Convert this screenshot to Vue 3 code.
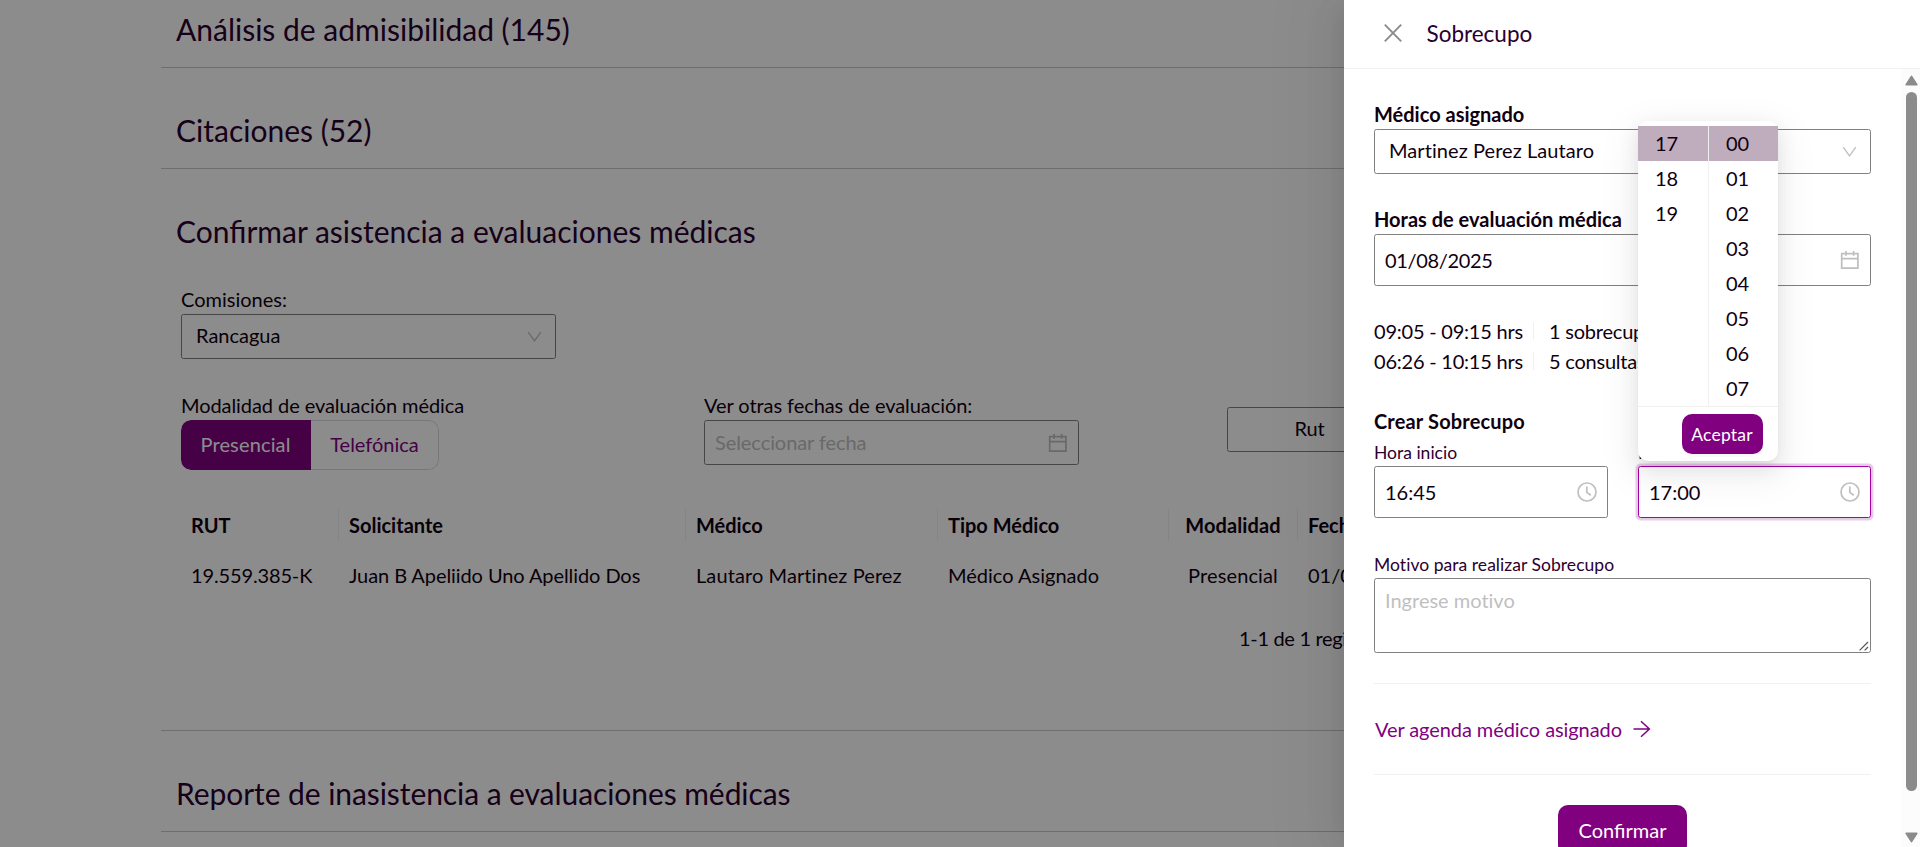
<script setup>
const columns = [
  { key: 'rut', title: 'RUT', value: '19.559.385-K' },
  { key: 'solicitante', title: 'Solicitante', value: 'Juan B Apeliido Uno Apellido Dos' },
  { key: 'medico', title: 'Médico', value: 'Lautaro Martinez Perez' },
  { key: 'tipo', title: 'Tipo Médico', value: 'Médico Asignado' },
  { key: 'modalidad', title: 'Modalidad', value: 'Presencial' },
  { key: 'fecha', title: 'Fecha', value: '01/08/2025' },
]
const slots = [
  { range: '09:05 - 09:15 hrs', detail: '1 sobrecupo' },
  { range: '06:26 - 10:15 hrs', detail: '5 consultas' },
]
const hours = ['17', '18', '19']
const minutes = ['00', '01', '02', '03', '04', '05', '06', '07']
</script>

<template>
  <div class="app">
    <main class="page">
      <section class="panel"><h2>Análisis de admisibilidad (145)</h2></section>
      <section class="panel"><h2>Citaciones (52)</h2></section>
      <section class="panel open">
        <h2>Confirmar asistencia a evaluaciones médicas</h2>
        <div class="content">
          <div class="field">
            <label>Comisiones:</label>
            <div class="select">
              <span>Rancagua</span>
              <svg class="chev" viewBox="0 0 15 12"><path d="M1.2 1.2 7.5 10 13.8 1.2" /></svg>
            </div>
          </div>
          <div class="filters">
            <div class="modality">
              <label>Modalidad de evaluación médica</label>
              <div class="segmented"><span class="on">Presencial</span><span>Telefónica</span></div>
            </div>
            <div class="other-date">
              <label>Ver otras fechas de evaluación:</label>
              <div class="date">
                <span>Seleccionar fecha</span>
                <svg class="cal" viewBox="0 0 20 20"><path d="M1.7 3.7h16.2v14.4H1.7zM1.7 8.7h16.2M6 1v4.8M13.6 1v4.8" /></svg>
              </div>
            </div>
            <div class="rut-box">Rut</div>
          </div>
          <div class="grid head">
            <div v-for="c in columns" :key="c.key" :class="c.key">{{ c.title }}</div>
          </div>
          <div class="grid row">
            <div v-for="c in columns" :key="c.key" :class="c.key">{{ c.value }}</div>
          </div>
          <div class="pager">1-1 de 1 registros</div>
        </div>
      </section>
      <section class="panel"><h2 class="tight">Reporte de inasistencia a evaluaciones médicas</h2></section>
    </main>

    <div class="mask"></div>

    <aside class="drawer">
      <header>
        <svg class="close" viewBox="0 0 20 20"><path d="M1.8 1.6 18.2 18.4M18.2 1.6 1.8 18.4" /></svg>
        <span>Sobrecupo</span>
      </header>
      <div class="scroller">
        <div class="body">
          <label class="strong">Médico asignado</label>
          <div class="select doctor">
            <span>Martinez Perez Lautaro</span>
            <svg class="chev" viewBox="0 0 15 12"><path d="M1.2 1.2 7.5 10 13.8 1.2" /></svg>
          </div>
          <label class="strong hours-label">Horas de evaluación médica</label>
          <div class="input">
            <span class="day">01/08/2025</span>
            <svg class="cal" viewBox="0 0 20 20"><path d="M1.7 3.7h16.2v14.4H1.7zM1.7 8.7h16.2M6 1v4.8M13.6 1v4.8" /></svg>
          </div>
          <div class="slots">
            <div v-for="s in slots" :key="s.range" class="slot"><span>{{ s.range }}</span><i></i><span>{{ s.detail }}</span></div>
          </div>
          <label class="strong create">Crear Sobrecupo</label>
          <div class="times">
            <div>
              <label class="small">Hora inicio</label>
              <div class="input">
                <span>16:45</span>
                <svg class="clock" viewBox="0 0 22 22"><circle cx="11" cy="11" r="9" /><path d="M10.8 5.6v5.8l4 2.8" /></svg>
              </div>
            </div>
            <div>
              <label class="small">Hora fin</label>
              <div class="input focus">
                <span>17:00</span>
                <svg class="clock" viewBox="0 0 22 22"><circle cx="11" cy="11" r="9" /><path d="M10.8 5.6v5.8l4 2.8" /></svg>
              </div>
            </div>
          </div>
          <label class="small reason">Motivo para realizar Sobrecupo</label>
          <div class="textarea">
            <span>Ingrese motivo</span>
            <svg class="grip" viewBox="0 0 10 10"><path d="M.6 9.4 9 1M5.6 9.4 9 6" /></svg>
          </div>
          <hr class="first" />
          <a class="link">
            <span>Ver agenda médico asignado</span>
            <svg viewBox="0 0 18 18"><path d="M.5 9h16M8 1.2 16.4 9 8 16.8" /></svg>
          </a>
          <hr />
          <button class="confirm">Confirmar</button>
        </div>
        <div class="scrollbar">
          <svg viewBox="0 0 13 11"><path d="M6.5 1.4 11.8 9.6H1.2z" /></svg>
          <div class="thumb"></div>
          <svg viewBox="0 0 13 11"><path d="M6.5 9.6 11.8 1.4H1.2z" /></svg>
        </div>
      </div>
    </aside>

    <div class="popup">
      <div class="cols">
        <div class="col"><div v-for="(h, i) in hours" :key="h" :class="{ sel: i === 0 }">{{ h }}</div></div>
        <div class="col"><div v-for="(m, i) in minutes" :key="m" :class="{ sel: i === 0 }">{{ m }}</div></div>
      </div>
      <div class="foot"><button>Aceptar</button></div>
    </div>
  </div>
</template>

<style>
body { margin: 0; overflow: hidden; background: #fff; }
</style>

<style scoped>
* { box-sizing: border-box; }
.app { position: relative; width: 1920px; height: 847px; overflow: hidden; font: 20px/30px Lato, "Noto Sans", sans-serif; font-variant-ligatures: none; color: #10000f; white-space: nowrap; }
svg { display: block; flex: none; fill: none; stroke: #bfbfbf; stroke-width: 1.7; }
button { font-family: inherit; border: 0; background: #800080; color: #fff; padding: 0; }
label { display: block; }
.page { margin: -33px 0 0 161px; }
.panel { height: 101px; border-bottom: 1px solid #c8c8c8; padding: 44px 0 0 15px; }
.panel.open { height: 562px; }
h2 { margin: 0; font-size: 30px; line-height: 36px; font-weight: 400; color: #2b0030; font-variant-ligatures: normal; letter-spacing: 0; }
.tight { letter-spacing: -.07px; }
.content { padding: 34px 0 0 5px; }
.field label { height: 31px; line-height: 32px; }
.select, .date, .input { display: flex; align-items: center; justify-content: space-between; border: 1px solid #808080; border-radius: 2.5px; }
.select { height: 45px; padding: 0 13px 0 14px; }
.select span { padding-bottom: 3px; }
.date span { padding-bottom: 2px; }
.field .select { width: 375px; }
.doctor span { letter-spacing: .07px; }
.chev { width: 15px; height: 12px; stroke-width: 1.3; }
.cal { width: 20px; height: 20px; }
.filters { display: flex; align-items: flex-start; margin-top: 31px; height: 119px; letter-spacing: -.07px; }
.modality { width: 523px; }
.segmented { display: flex; width: 258px; height: 50px; border-radius: 10px; overflow: hidden; line-height: 46px; text-align: center; letter-spacing: 0; }
.segmented span { width: 128px; color: #800080; border: 1px solid #d9d9d9; border-left: 0; border-radius: 0 10px 10px 0; }
.segmented .on { width: 130px; color: #fff; background: #800080; border-color: #800080; border-radius: 10px 0 0 10px; letter-spacing: .15px; }
.date { width: 375px; height: 45px; padding: 0 10px; color: #bfbfbf; }
.rut-box { margin: 17px 0 0 148px; width: 165px; height: 45px; line-height: 40px; text-align: center; border: 1px solid #808080; border-radius: 2.5px; }
.grid { display: grid; grid-template-columns: 158px 347px 252px 231px 129px 150px; height: 32px; line-height: 32px; }
.grid div { padding-left: 10px; border-right: 1px solid transparent; }
.head { font-weight: 700; }
.grid.head div { border-color: #f0f0f0; }
.grid .modalidad { padding: 0; text-align: center; letter-spacing: .12px; }
.row { margin-top: 18px; }
.row .rut { letter-spacing: -.14px; }
.row .solicitante { letter-spacing: -.08px; }
.row .medico { letter-spacing: .09px; }
.pager { margin: 32px 0 0 1058px; letter-spacing: -.32px; }
.mask { position: absolute; inset: 0; background: rgba(0, 0, 0, .45); }
.drawer { position: absolute; top: 0; right: 0; width: 576px; height: 847px; background: #fff; box-shadow: -7px 0 20px -10px rgba(0, 0, 0, .08), -11px 0 35px rgba(0, 0, 0, .05), -15px 0 60px 20px rgba(0, 0, 0, .03); }
.drawer header { display: flex; align-items: center; height: 69px; padding: 0 0 2px 39px; border-bottom: 1px solid #f0f0f0; font-size: 22.5px; color: #2b0030; }
.drawer header span { padding-top: 2px; }
.close { width: 20px; height: 20px; margin-right: 23.5px; stroke: #8c8c8c; stroke-width: 1.9; }
.scroller { display: flex; height: 778px; overflow: hidden; }
.body { width: 557px; padding: 30px 30px 0; }
.strong { font-weight: 700; }
.hours-label { margin-top: 30px; }
.input { height: 52px; padding: 0 10px; }
.day { letter-spacing: -.35px; }
.slots { margin-top: 30px; }
.slot { display: flex; height: 30px; align-items: center; letter-spacing: -.22px; }
.slot span:first-child { width: 159px; }
.slot i { width: 1px; height: 18px; background: #f0f0f0; margin-right: 15px; }
.create { margin-top: 30px; letter-spacing: .16px; }
.times { display: grid; grid-template-columns: 234px 233px; gap: 30px; }
.small { height: 30px; font-size: 17.5px; line-height: 33px; color: #2b0030; }
.focus { border-color: #a600a6; box-shadow: 0 0 0 2.5px rgba(128, 0, 128, .2); }
.clock { width: 22px; height: 22px; margin-right: -1px; }
.reason { margin-top: 30px; letter-spacing: .04px; }
.textarea { position: relative; height: 75px; border: 1px solid #808080; border-radius: 2.5px; padding: 6px 10px; color: #bfbfbf; }
.grip { position: absolute; right: 1px; bottom: 1px; width: 10px; height: 10px; stroke: #555; stroke-width: 1.2; }
hr { margin: 0; height: 1px; border: 0; background: #f0f0f0; }
.first { margin-top: 30px; }
.link { display: flex; align-items: center; height: 90px; padding-left: 1px; color: #800080; letter-spacing: -.08px; }
.link svg { width: 18px; height: 18px; margin: -1px 0 0 11px; stroke: #800080; stroke-width: 1.5; }
.confirm { display: block; margin: 30px auto 0; width: 129px; height: 50px; border-radius: 10px; font-size: 20px; line-height: 50px; font-variant-ligatures: normal; }
.scrollbar { display: flex; flex-direction: column; align-items: center; width: 19px; background: #fcfcfc; padding: 6px 0 4px 1px; }
.scrollbar svg { width: 13px; height: 11px; fill: #8b8b8b; stroke: #8b8b8b; stroke-linejoin: round; stroke-width: 1.7; }
.thumb { width: 11px; height: 699px; margin: 6px 0 41px; border-radius: 6px; background: #8b8b8b; }
.popup { position: absolute; left: 1638px; top: 121px; width: 140px; height: 340px; padding-top: 5px; background: #fff; border-radius: 10px; box-shadow: 0 7.5px 20px rgba(0, 0, 0, .08), 0 4px 8px -5px rgba(0, 0, 0, .12), 0 11px 35px 10px rgba(0, 0, 0, .05); }
.cols { display: flex; height: 280px; }
.col { width: 69px; line-height: 35px; }
.col:first-child { width: 71px; border-right: 1px solid #f0f0f0; }
.col div { height: 35px; padding-left: 17px; }
.col .sel { background: #bfacbd; }
.foot { height: 55px; border-top: 1px solid #f0f0f0; padding: 7px 15px 0 44px; }
.foot button { display: block; width: 81px; height: 40px; border-radius: 10px; font-size: 17.5px; line-height: 40px; padding: 1px 1px 0 0; letter-spacing: .2px; box-shadow: 0 3px 0 rgba(0, 0, 0, .025); }
</style>
